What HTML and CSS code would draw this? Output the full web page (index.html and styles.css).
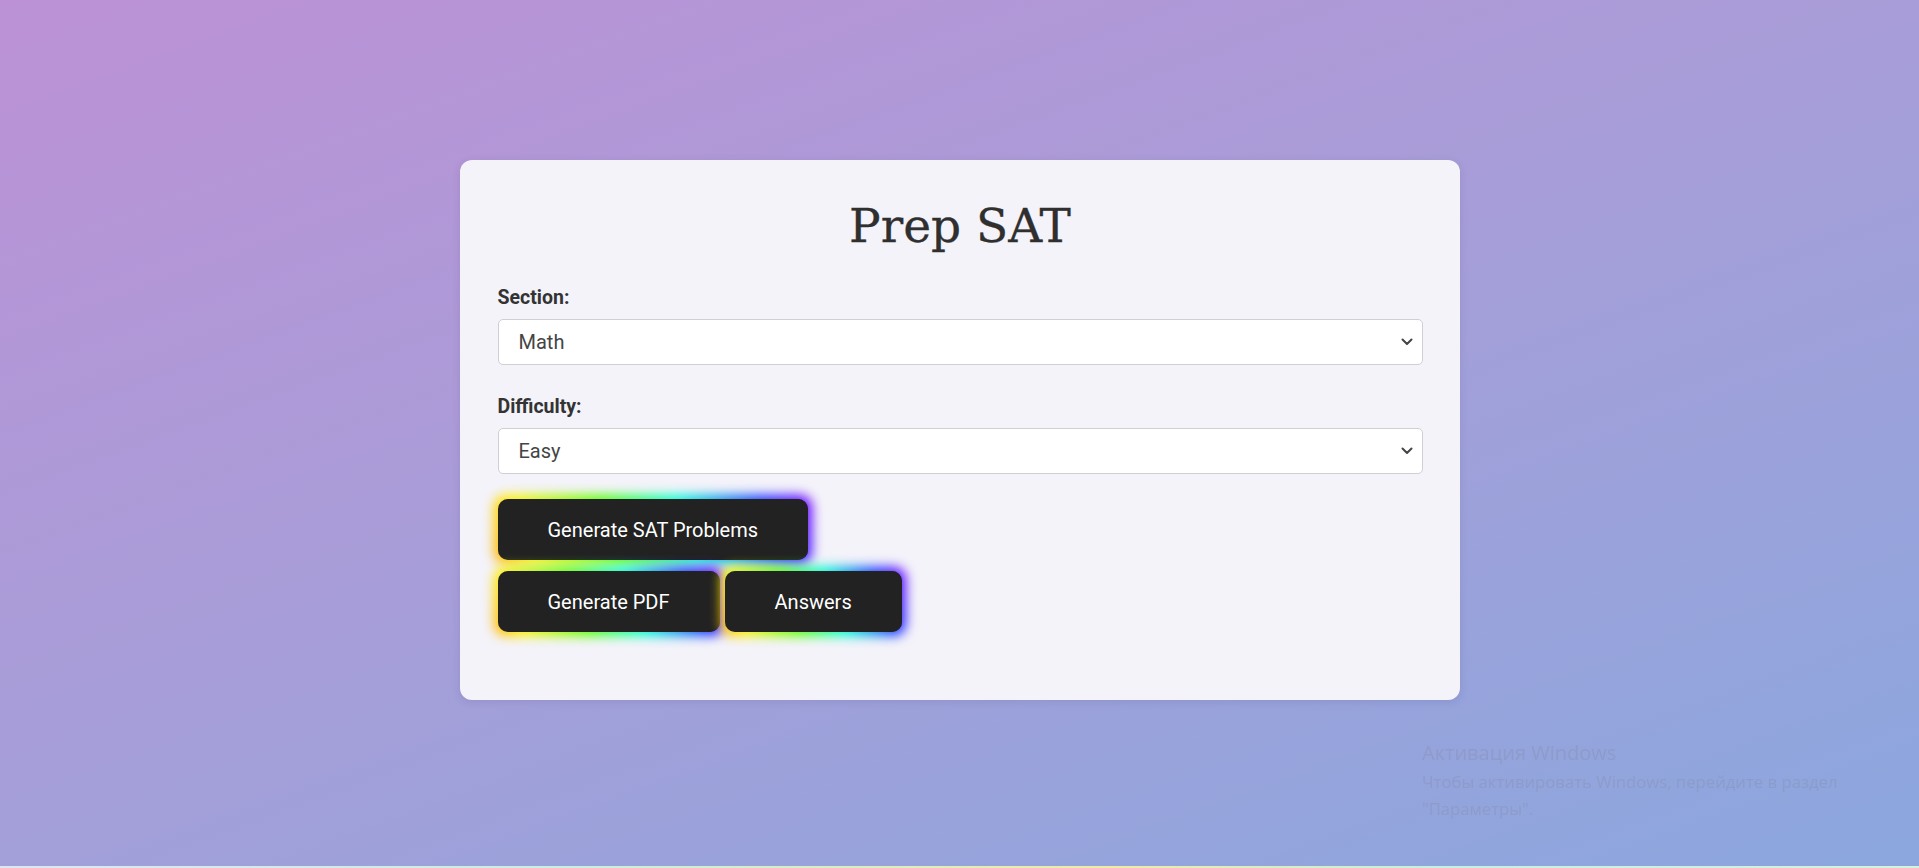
FILE: index.html
```html
<!DOCTYPE html>
<html lang="en">
<head>
<meta charset="utf-8">
<title>Prep SAT</title>
<link rel="stylesheet" href="styles.css">
</head>
<body>
<main class="page">
  <section class="card">
    <h1 class="title">Prep SAT</h1>
    <form class="form">
      <label class="label" for="section">Section:</label>
      <div class="select-wrap">
        <select id="section" class="select">
          <option>Math</option>
          <option>Reading and Writing</option>
        </select>
        <svg class="chev" width="12" height="8" viewBox="0 0 12 8"><path d="M1.5 1.5 L6 6 L10.5 1.5" fill="none" stroke="#444" stroke-width="2" stroke-linecap="round" stroke-linejoin="round"/></svg>
      </div>
      <label class="label" for="difficulty">Difficulty:</label>
      <div class="select-wrap">
        <select id="difficulty" class="select">
          <option>Easy</option>
          <option>Medium</option>
          <option>Hard</option>
        </select>
        <svg class="chev" width="12" height="8" viewBox="0 0 12 8"><path d="M1.5 1.5 L6 6 L10.5 1.5" fill="none" stroke="#444" stroke-width="2" stroke-linecap="round" stroke-linejoin="round"/></svg>
      </div>
      <div class="actions">
        <div class="row">
          <button type="button" class="glow">Generate SAT Problems</button>
        </div>
        <div class="row">
          <button type="button" class="glow">Generate PDF</button>
          <button type="button" class="glow">Answers</button>
        </div>
      </div>
    </form>
  </section>
</main>
<div class="watermark">
  <div class="wm-title">Активация Windows</div>
  <div class="wm-text">Чтобы активировать Windows, перейдите в раздел<br>"Параметры".</div>
</div>
<div class="edge"></div>
</body>
</html>
```

FILE: styles.css
```css
html, body {
  margin: 0;
  padding: 0;
  height: 100%;
}
body {
  background: linear-gradient(160deg, #bc91d6 0%, #a89dd8 45%, #8ba7de 100%);
  font-family: Roboto, "Liberation Sans", Arial, sans-serif;
  overflow: hidden;
}
.page {
  padding-top: 160px;
}
.card {
  width: 1000px;
  box-sizing: border-box;
  margin: 0 auto;
  background: #f4f3fa;
  border-radius: 12px;
  box-shadow: 0 2px 8px rgba(60, 40, 110, 0.12);
  padding: 37px 37px 68px 38px;
}
.title {
  margin: 0;
  text-align: center;
  font-family: "DejaVu Serif", "Liberation Serif", serif;
  font-weight: 400;
  font-size: 47px;
  line-height: 57px;
  color: #2f2f2f;
  -webkit-text-stroke: 0.3px #2f2f2f;
}
.form {
  display: flex;
  flex-direction: column;
  margin-top: 33px;
}
.label {
  display: block;
  font-weight: 700;
  font-size: 19.5px;
  line-height: 22px;
  color: #333;
  margin-bottom: 10px;
}
.select-wrap {
  position: relative;
  margin-bottom: 31px;
}
.select {
  display: block;
  width: 100%;
  height: 46px;
  box-sizing: border-box;
  appearance: none;
  -webkit-appearance: none;
  border: 1px solid #cfcfd6;
  border-radius: 5px;
  background: #fff;
  padding: 0 40px 0 20px;
  font-family: Roboto, "Liberation Sans", Arial, sans-serif;
  font-size: 20px;
  color: #454545;
}
.chev {
  position: absolute;
  right: 10px;
  top: 19px;
  pointer-events: none;
}
.actions {
  display: flex;
  flex-direction: column;
  gap: 11px;
  margin-top: -6px;
}
.row {
  display: flex;
  gap: 5px;
}
.glow {
  position: relative;
  z-index: 0;
  height: 61px;
  padding: 0 50px;
  border: none;
  border-radius: 10px;
  background: #222;
  color: #fff;
  font-family: Roboto, "Liberation Sans", Arial, sans-serif;
  font-size: 20px;
  cursor: pointer;
}
.glow::before {
  content: "";
  position: absolute;
  top: -4px;
  left: -4px;
  width: calc(100% + 8px);
  height: calc(100% + 8px);
  border-radius: 12px;
  background: linear-gradient(70deg, #ffa800 0%, #fff200 12%, #54ff00 38%, #00ffd5 60%, #1a3cff 84%, #7a00ff 100%);
  filter: blur(6px);
  z-index: -1;
}
.glow::after {
  content: "";
  position: absolute;
  inset: 0;
  border-radius: 10px;
  background: #222;
  z-index: -1;
}
.watermark {
  position: fixed;
  left: 1422px;
  top: 738px;
  font-family: "Open Sans", "Liberation Sans", sans-serif;
  color: rgba(120, 120, 135, 0.2);
}
.wm-title {
  font-size: 20px;
  line-height: 30px;
}
.wm-text {
  font-size: 16.7px;
  line-height: 27px;
}
.edge {
  position: fixed;
  left: 0;
  right: 0;
  bottom: 0;
  height: 2px;
  background: linear-gradient(90deg, #dfe6f2 0%, #cbeee0 30%, #efeaa8 58%, #c8efe2 75%, #d8f0e0 100%);
}
```
